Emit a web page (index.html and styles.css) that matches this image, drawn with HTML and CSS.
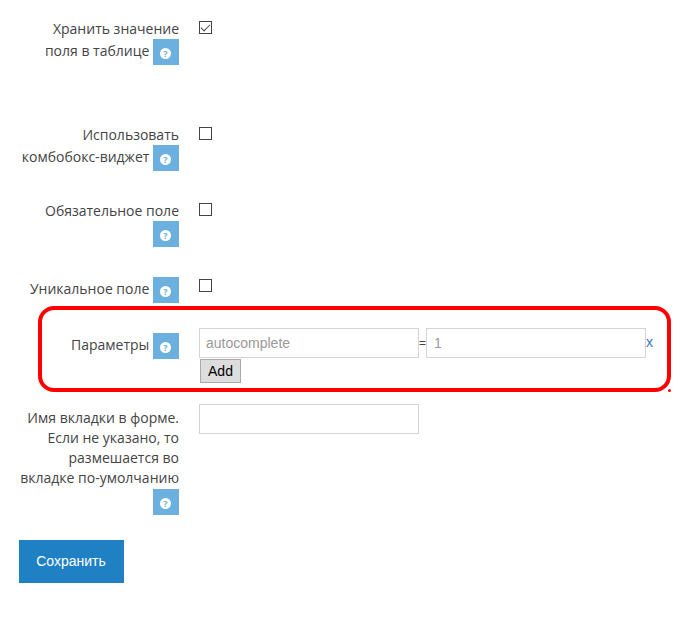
FILE: index.html
```html
<!DOCTYPE html>
<html lang="en">
<head>
    <meta charset="UTF-8">
    <title>Настройки поля</title>
    <link rel="stylesheet" href="styles.css">
</head>
<body>
    <form class="field-form">
        <div class="form-row row-tall">
            <label class="field-label">Хранить значение поля в таблице <span class="help"><span class="help-dot">?</span></span></label>
            <div class="field-body"><input class="check" type="checkbox" checked></div>
        </div>
        <div class="form-row">
            <label class="field-label">Использовать комбобокс-виджет <span class="help"><span class="help-dot">?</span></span></label>
            <div class="field-body"><input class="check" type="checkbox"></div>
        </div>
        <div class="form-row">
            <label class="field-label">Обязательное поле <span class="help"><span class="help-dot">?</span></span></label>
            <div class="field-body"><input class="check" type="checkbox"></div>
        </div>
        <div class="form-row">
            <label class="field-label">Уникальное поле <span class="help"><span class="help-dot">?</span></span></label>
            <div class="field-body"><input class="check" type="checkbox"></div>
        </div>
        <div class="form-row row-params">
            <label class="field-label">Параметры <span class="help"><span class="help-dot">?</span></span></label>
            <div class="field-body">
                <div class="param-line">
                    <input class="text-input param-input" type="text" placeholder="autocomplete">
                    <span class="equals">=</span>
                    <input class="text-input param-input" type="text" placeholder="1">
                    <a class="remove" href="#">x</a>
                </div>
                <button class="add-btn" type="button">Add</button>
            </div>
        </div>
        <div class="form-row row-tab">
            <label class="field-label">Имя вкладки в форме. Если не указано, то размешается во вкладке по-умолчанию <span class="help"><span class="help-dot">?</span></span></label>
            <div class="field-body"><input class="text-input" type="text"></div>
        </div>
        <button class="save-btn" type="button">Сохранить</button>
    </form>

    <!-- red annotation drawn over the screenshot -->
    <div class="highlight"></div>
    <div class="highlight-dot"></div>
</body>
</html>
```

FILE: styles.css
```css
body {
    margin: 0;
    font-family: "Open Sans", sans-serif;
    font-size: 14px;
    line-height: 20px;
    color: #444;
    background: #fff;
}
.field-form {
    padding: 15px 0 39px 19px;
}
.form-row {
    display: flex;
    margin-bottom: 26px;
}
.row-tall {
    margin-bottom: 56px;
}
.row-params {
    margin-bottom: 21px;
}
.row-tab {
    margin-bottom: 25px;
}
.row-tab .help {
    margin-top: 1px;
}
.field-label {
    width: 160px;
    padding-top: 4px;
    text-align: right;
}
.field-body {
    margin-left: 20px;
}
.row-params .field-body {
    margin-top: -1px;
}
.help {
    display: inline-flex;
    align-items: center;
    justify-content: center;
    box-sizing: border-box;
    width: 26px;
    height: 26px;
    padding: 3px 1px 0 0;
    background: #6cb0e0;
    vertical-align: middle;
}
.help-dot {
    display: block;
    width: 11px;
    height: 11px;
    border-radius: 50%;
    background: #fff;
    color: #6cb0e0;
    font-size: 9px;
    font-weight: 700;
    line-height: 11px;
    text-align: center;
}
.check {
    appearance: none;
    display: block;
    position: relative;
    width: 13px;
    height: 13px;
    margin: 6px 0 0;
    border: 1px solid #444;
    background: #fff;
}
.check:checked::after {
    content: "";
    position: absolute;
    left: 3px;
    top: 0;
    width: 4px;
    height: 8px;
    border: solid #444;
    border-width: 0 1.5px 1.5px 0;
    transform: rotate(45deg);
}
.text-input {
    display: block;
    box-sizing: border-box;
    width: 220px;
    height: 30px;
    padding: 0 6px;
    border: 1px solid #d4d4d4;
    background: #fff;
    font-family: "Liberation Sans", sans-serif;
    font-size: 14px;
}
.text-input::placeholder {
    color: #999;
    opacity: 1;
}
.param-input + .equals + .param-input {
    padding-left: 7px;
}
.param-line {
    display: flex;
    align-items: center;
}
.equals {
    width: 7px;
    font-family: "Liberation Sans", sans-serif;
    font-size: 12px;
    text-align: center;
}
.remove {
    color: #337ab7;
    font-family: "Liberation Sans", sans-serif;
    font-size: 14px;
    line-height: 30px;
    margin-top: -2px;
    text-decoration: none;
}
.add-btn {
    display: block;
    box-sizing: border-box;
    width: 41px;
    height: 24px;
    margin: 1px 0 0 1px;
    padding: 0;
    border: 1px solid #aaa;
    background: #ddd;
    color: #000;
    font-family: "Liberation Sans", sans-serif;
    font-size: 14px;
}
.save-btn {
    display: block;
    width: 105px;
    height: 43px;
    padding: 0 1px 2px 0;
    border: 0;
    background: #2080c4;
    color: #fff;
    font-family: "Liberation Sans", sans-serif;
    font-size: 14px;
}
.highlight {
    position: absolute;
    left: 38px;
    top: 306px;
    width: 625px;
    height: 78px;
    border: 4px solid #f00;
    border-radius: 16px;
}
.highlight-dot {
    position: absolute;
    left: 668px;
    top: 389px;
    width: 3px;
    height: 3px;
    border-radius: 50%;
    background: #f00;
}
```
